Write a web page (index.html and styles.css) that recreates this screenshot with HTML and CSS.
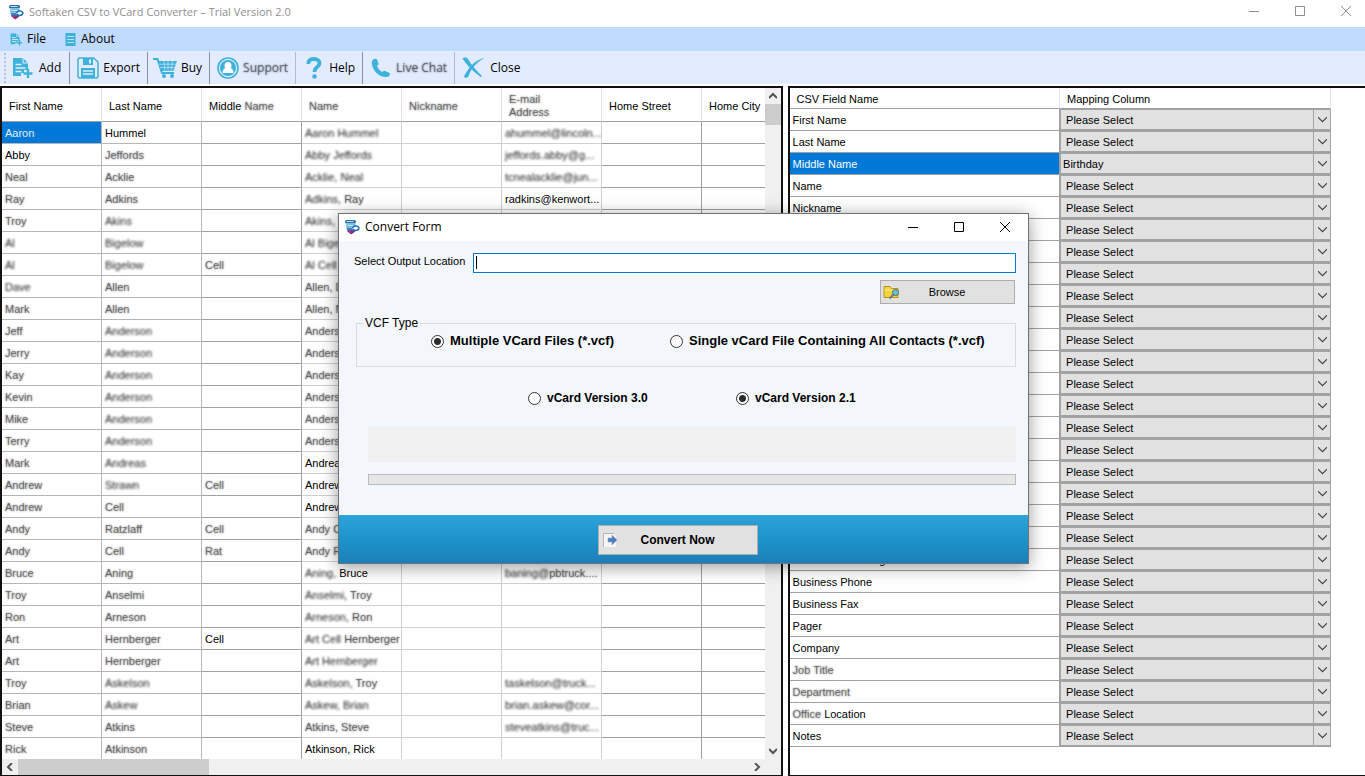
FILE: index.html
```html
<!DOCTYPE html>
<html lang="en">
<head>
<meta charset="utf-8">
<title>Softaken CSV to VCard Converter – Trial Version 2.0</title>
<link rel="stylesheet" href="styles.css">
</head>
<body>
<svg class="defs" aria-hidden="true">
  <symbol id="logo" viewBox="0 0 16 16">
    <rect x="1" y="1" width="11" height="3.500" rx="1.500" fill="#2b73b0"/>
    <path d="M2.500 2.500h7" stroke="#b9e0f5" stroke-width="1"/>
    <rect x="2" y="5" width="10" height="3" rx="1.500" fill="#5ab4e0"/>
    <path d="M3.500 6.300h6" stroke="#e4f5fd" stroke-width="1"/>
    <path d="M2 8.500h8v4H4z" fill="#3a83bd"/>
    <path d="M8.500 9c1-2.500 5-2.600 6-.8 1 2-1 3.600-3.500 3.300L9 10.500" fill="#fff" stroke="#1d6fb3" stroke-width="1.600"/>
    <path d="M2.500 11.500l4.500 4 4.500-3-3-1z" fill="#7d2c86"/>
    <path d="M5 12l2.500 1.800" stroke="#d93a6a"/>
  </symbol>
  <symbol id="file-add" viewBox="0 0 20 22">
    <path d="M0 1h10l5 5v7h-4v3H8v3H0z" fill="currentColor"/>
    <path d="M10 1v5h5" fill="none" stroke="#e3ecff" stroke-width="1"/>
    <path d="M2.500 7.500h6M2.500 11h10M2.500 14.500h6" stroke="#e3ecff" stroke-width="1.500"/>
    <path d="M15 12v9M10.500 16.500h9" stroke="currentColor" stroke-width="2.400"/>
  </symbol>
  <symbol id="list" viewBox="0 0 12 13">
    <rect x="1" width="10" height="13" fill="currentColor"/>
    <path d="M2.500 3.500h7M2.500 6.500h7M2.500 9.500h7" stroke="#bfdbff"/>
  </symbol>
  <symbol id="disk" viewBox="0 0 22 22">
    <path d="M3 1h13.500L21 5v14a2 2 0 0 1-2 2H3a2 2 0 0 1-2-2V3a2 2 0 0 1 2-2z" fill="#e3ecff" stroke="currentColor" stroke-width="1.500"/>
    <path d="M6 1h10v7H6z" fill="currentColor"/><path d="M12 2.500h2v4h-2z" fill="#e3ecff"/>
    <rect x="4" y="11" width="14" height="10" fill="currentColor"/>
    <path d="M6 14h10M6 17h10" stroke="#e3ecff" stroke-width="1.400"/>
  </symbol>
  <symbol id="cart" viewBox="0 0 24 22">
    <path d="M0 2h4.500L9 16h12" fill="none" stroke="currentColor" stroke-width="2"/>
    <path d="M5 4h19l-3.500 10H8z" fill="currentColor"/>
    <path d="M6 7.200h17M7 10.500h15M11 4l1 10M15 4v10M19.500 4L18 14" stroke="#e3ecff" stroke-width=".6"/>
    <circle cx="11" cy="19" r="2" fill="currentColor"/><circle cx="19" cy="19" r="2" fill="currentColor"/>
  </symbol>
  <symbol id="support" viewBox="0 0 22 22">
    <circle cx="11" cy="11" r="10" fill="none" stroke="currentColor" stroke-width="1.600"/>
    <circle cx="11" cy="11" r="8" fill="currentColor"/>
    <circle cx="11" cy="8.500" r="3.500" fill="#fff"/>
    <path d="M5.500 16c0-3 1.500-5 3.500-5h4c2 0 3.500 2 3.500 5z" fill="#fff"/>
  </symbol>
  <symbol id="help" viewBox="0 0 16 22">
    <path d="M2.500 7C2 3 5 2 8 2c3.500 0 5.500 1.800 5.500 4.300C13.500 10 8.500 10 8.500 15" fill="none" stroke="currentColor" stroke-width="3.800"/>
    <circle cx="8.500" cy="19.500" r="2.300" fill="currentColor"/>
  </symbol>
  <symbol id="phone" viewBox="0 0 22 22">
    <path d="M3 2.500C5 1.300 7 1.800 7.500 3.500l1 3c.3 1-.3 1.500-1.500 2.300 1 3 2.800 5 5.500 6.300 1-1.200 1.700-1.600 2.600-1.200l4 1.800c1.300.7 1 2.300 0 3.300C16 21.500 10 19.500 6.500 16 3 12.500 0 5.500 3 2.500z" fill="currentColor"/>
  </symbol>
  <symbol id="cross" viewBox="0 0 24 22">
    <path d="M1 1.500C3 0 5 1 6 2.500 9 8 14 14 19.500 19c-.5.800-1 .500-1.500 0C11 14 5 8 1 1.500z" fill="currentColor" stroke="currentColor"/>
    <path d="M23 1C16 4 10 10 6.500 19c-.5 2-3.500 2.500-4.500.500C7 10 13 2.500 23 1z" fill="currentColor"/>
  </symbol>
  <symbol id="min" viewBox="0 0 10 10"><path d="M0 5.500h10" stroke="currentColor"/></symbol>
  <symbol id="max" viewBox="0 0 10 10"><path d="M.5.500h9v9h-9z" fill="none" stroke="currentColor"/></symbol>
  <symbol id="x" viewBox="0 0 10 10"><path d="M0 0l10 10M10 0L0 10" stroke="currentColor"/></symbol>
  <symbol id="chev" viewBox="0 0 8 8"><path d="M0 2l4 4 4-4" fill="none" stroke="currentColor" stroke-width="2"/></symbol>
  <symbol id="arrow" viewBox="0 0 8 8"><path d="M0 2l4 4 4-4" fill="none" stroke="currentColor"/></symbol>
</svg>

<header class="titlebar">
  <svg class="logo"><use href="#logo"/></svg>
  <h1>Softaken CSV to VCard Converter – Trial Version 2.0</h1>
  <div class="winbtns">
    <button aria-label="Minimize"><svg><use href="#min"/></svg></button>
    <button aria-label="Maximize"><svg><use href="#max"/></svg></button>
    <button aria-label="Close window"><svg><use href="#x"/></svg></button>
  </div>
</header>

<nav class="menu">
  <button><svg><use href="#file-add"/></svg>File</button>
  <button><svg><use href="#list"/></svg>About</button>
</nav>

<div class="toolbar">
  <button class="first"><svg><use href="#file-add"/></svg>Add</button>
  <button><svg><use href="#disk"/></svg>Export</button>
  <button class="tight"><svg><use href="#cart"/></svg>Buy</button>
  <button class="soft"><svg><use href="#support"/></svg><span>Support</span></button>
  <button><svg><use href="#help"/></svg>Help</button>
  <button class="soft"><svg><use href="#phone"/></svg><span>Live Chat</span></button>
  <button class="tight"><svg><use href="#cross"/></svg>Close</button>
</div>

<main class="panes">
  <section class="pane contacts">
    <div class="view">
      <table class="grid">
        <thead>
          <tr>
            <th>First Name</th><th>Last Name</th><th>Middle <span class="mild">Name</span></th>
            <th><span class="mild">Name</span></th><th><span class="mild">Nickname</span></th>
            <th class="wrap"><span class="mild">E-mail Address</span></th><th>Home Street</th><th>Home City</th>
          </tr>
        </thead>
        <tbody id="contacts"></tbody>
      </table>
    </div>
    <div class="scroll vertical">
      <button aria-label="Scroll up"><svg class="up"><use href="#chev"/></svg></button>
      <span class="thumb"></span>
      <button aria-label="Scroll down"><svg><use href="#chev"/></svg></button>
    </div>
    <div class="scroll horizontal">
      <button aria-label="Scroll left"><svg class="left"><use href="#chev"/></svg></button>
      <span class="thumb"></span>
      <button aria-label="Scroll right"><svg class="right"><use href="#chev"/></svg></button>
    </div>
  </section>

  <section class="pane mapping">
    <table class="map">
      <thead><tr><th>CSV Field Name</th><th>Mapping Column</th></tr></thead>
      <tbody id="fields"></tbody>
    </table>
  </section>
</main>

<div class="dialog" role="dialog" aria-labelledby="dialog-title">
  <div class="dialog-title">
    <svg class="logo"><use href="#logo"/></svg>
    <h2 id="dialog-title">Convert Form</h2>
    <div class="winbtns">
      <button aria-label="Minimize dialog"><svg><use href="#min"/></svg></button>
      <button aria-label="Maximize dialog"><svg><use href="#max"/></svg></button>
      <button aria-label="Close dialog"><svg><use href="#x"/></svg></button>
    </div>
  </div>
  <form class="dialog-body">
    <div class="location">
      <label for="output">Select Output Location</label>
      <div class="field"><input id="output" type="text"><span class="caret"></span></div>
    </div>
    <button type="button" class="btn browse">
      <svg viewBox="0 0 18 16">
        <path d="M1 2.500h6l1.500 2H15v9H1z" fill="#f2d43c" stroke="#b8941c"/>
        <path d="M1.500 6h13" stroke="#fbee98"/>
        <path d="M10.500 10.500l-4 4" stroke="#777" stroke-width="2"/>
        <circle cx="12.500" cy="8.500" r="3" fill="#6fc0cf" stroke="#496a78"/>
      </svg>
      <span>Browse</span>
    </button>
    <fieldset>
      <legend>VCF Type</legend>
      <label><input type="radio" name="type" checked>Multiple VCard Files (*.vcf)</label>
      <label><input type="radio" name="type">Single vCard File Containing All Contacts (*.vcf)</label>
    </fieldset>
    <div class="versions">
      <label><input type="radio" name="version">vCard Version 3.0</label>
      <label><input type="radio" name="version" checked>vCard Version 2.1</label>
    </div>
    <div class="status"></div>
    <div class="progress" role="progressbar" aria-label="Conversion progress"></div>
  </form>
  <div class="dialog-foot">
    <button type="button" class="btn convert">
      <svg viewBox="0 0 16 16">
        <path d="M1 1h10l3 3v11H1z" fill="#f5f5f5"/><path d="M1.500 15V1.500H12" fill="none" stroke="#b5b5b5"/>
        <path d="M6 6h4V3l5 5-5 5v-3H6z" fill="#4f80bd" stroke="#86a6ce" stroke-width=".6"/>
      </svg>
      <span>Convert Now</span>
    </button>
  </div>
</div>
<script src="app.js"></script>
</body>
</html>
```

FILE: styles.css
```css
* { box-sizing: border-box; }
body {
  margin: 0;
  height: 100vh;
  display: flex;
  flex-direction: column;
  overflow: hidden;
  background: #fff;
  color: #000;
  font: 11px/14px "Liberation Sans", Arial, sans-serif;
}
button { margin: 0; padding: 0; border: 0; background: none; color: inherit; font: inherit; }
h1, h2 { margin: 0; font-size: 12px; font-weight: 400; }
.defs { position: absolute; width: 0; height: 0; }
.titlebar, .menu, .toolbar, .dialog-title { font: 12px/16px "Open Sans", "Noto Sans", sans-serif; }

.titlebar { height: 27px; flex: none; display: flex; align-items: center; padding: 0 8px; color: #8f8f8f; }
.titlebar h1 { padding-bottom: 3px; font-size: 11px; }
.logo { width: 16px; height: 16px; margin-right: 5px; }
.titlebar .logo { margin-bottom: 3px; }
.winbtns { margin-left: auto; display: flex; }
.winbtns button { width: 46px; height: 22px; display: grid; place-items: center; }
.winbtns svg { width: 10px; height: 10px; }
.titlebar .winbtns { margin-right: -12px; margin-bottom: 5px; }

.menu { height: 24px; flex: none; display: flex; align-items: center; gap: 18px; padding-left: 10px; background: #bfdbff; }
.menu button { display: flex; align-items: center; gap: 4px; }
.menu svg { width: 13px; height: 13px; color: #3fb2db; }

.toolbar { height: 33px; flex: none; display: flex; padding: 1px 0 0 4px; background: #e3ecff; }
.toolbar::before { content: ""; margin: 1px 1px 1px 0; border-left: 2px dotted #b9c0d0; }
.toolbar button { display: flex; align-items: center; gap: 4px; padding: 0 7px; border-right: 1px solid #8b8f98; }
.toolbar .first { gap: 5px; padding: 0 8px 0 5px; }
.toolbar .tight { padding-left: 5px; }
.toolbar button:last-child { border: 0; padding-left: 7px; }
.toolbar svg { width: 22px; height: 22px; color: #3fb2db; }
.toolbar .tight svg { width: 24px; }
.toolbar .soft { border-color: #b5bac6; }
.toolbar .soft span { color: rgba(0, 0, 0, .4); text-shadow: 0 0 2px rgba(0, 0, 0, .6); }

.panes { flex: 1; min-height: 0; display: flex; gap: 5px; padding-top: 2px; }
.pane { min-width: 0; border: 2px solid #111; border-bottom-width: 1px; overflow: hidden; }
.contacts { flex: 782; display: grid; grid-template: minmax(0, 1fr) 16px / minmax(0, 1fr) 16px; }
.mapping { flex: 578; border-right: 0; }
.view { overflow: hidden; }
table { border-collapse: separate; border-spacing: 0; table-layout: fixed; }
th { font-weight: 400; text-align: left; padding: 1px 7px 0; }
td { padding: 0 3px; height: 22px; white-space: nowrap; overflow: hidden; border: solid #a0a0a0; border-width: 0 1px 1px 0; }

.grid { width: 800px; }
.grid th { height: 34px; padding-top: 3px; line-height: 13px; white-space: nowrap; border: solid #e2e2e2; border-width: 0 1px 0 0; border-bottom: 1px solid #a0a0a0; }
.grid .wrap { padding-right: 40px; white-space: normal; }
.grid td:nth-child(-n+2) { border-color: #b6b6b6; }
.grid td:nth-child(n+4):nth-child(-n+6) { border-color: #cfcfcf; }
.grid .selected { background: #0078d7; color: #e4f1fb; }
.mild { color: rgba(0, 0, 0, .4); text-shadow: 0 0 2px rgba(0, 0, 0, .6); }
.heavy { color: #222; filter: blur(1px); }

.scroll { display: flex; background: #f0f0f0; color: #555; }
.scroll button { width: 16px; height: 16px; display: grid; place-items: center; }
.scroll svg { width: 8px; height: 8px; }
.up { transform: rotate(180deg); }
.left { transform: rotate(90deg); }
.right { transform: rotate(-90deg); }
.thumb { background: #cdcdcd; }
.vertical { flex-direction: column; }
.vertical .thumb { height: 21px; margin-bottom: auto; }
.horizontal .thumb { width: 25%; margin-right: auto; }
.contacts::after { content: ""; background: #f0f0f0; }

.map { width: 541px; }
.map th { height: 21px; border-bottom: 1px solid #a0a0a0; border-right: 1px solid #e2e2e2; }
.map td + td { padding: 0; border-right: 0; }
.map .selected { background: #0078d7; color: #fff; }
.pick { position: relative; }
.pick select {
  display: block;
  appearance: none;
  width: 100%;
  height: 21px;
  margin: 0;
  padding: 0 5px;
  border: 1px solid #a3a3a3;
  border-radius: 0;
  background: #e1e1e1;
  color: #000;
  font: inherit;
}
.pick .near { padding-left: 2px; }
.pick svg { position: absolute; right: 0; top: 0; width: 18px; height: 21px; padding: 6px 4px; border-left: 1px solid #a3a3a3; color: #444; pointer-events: none; }

.dialog {
  position: absolute;
  left: 338px;
  top: 213px;
  width: 691px;
  border: 1px solid #6d7378;
  background: #f3f7fc;
  box-shadow: 0 3px 16px rgba(0, 0, 0, .4);
}
.dialog-title { height: 27px; display: flex; align-items: center; padding: 0 0 2px 5px; background: #fff; }
.dialog-body { height: 274px; padding: 12px 12px 0 15px; display: flex; flex-direction: column; }
.location { display: flex; gap: 10px; }
.location label { width: 109px; white-space: nowrap; padding-top: 1px; }
.field { flex: 1; position: relative; }
.field input { display: block; width: 100%; height: 20px; border: 1px solid #0078d7; background: #fff; font: inherit; outline: 0; padding: 0 4px; }
.caret { position: absolute; left: 3px; top: 3px; width: 1px; height: 13px; background: #000; }
.btn { display: flex; align-items: center; background: #e1e1e1; border: 1px solid #adadad; }
.btn span { flex: 1; text-align: center; }
.browse { align-self: flex-end; width: 135px; height: 24px; margin: 7px 1px 0 0; padding: 0 21px 0 2px; }
.browse svg { width: 18px; height: 16px; }
fieldset { margin: 13px 0 0 2px; padding: 5px 0 0 74px; height: 50px; border: 1px solid #dcdcdc; display: flex; gap: 56px; }
legend { margin-left: -68px; padding: 0 2px; line-height: 12px; font-size: 12px; }
fieldset label, .versions label { display: flex; align-items: center; gap: 6px; height: 14px; font-weight: 700; font-size: 13px; white-space: nowrap; }
.versions { display: grid; grid-template-columns: 208px auto; padding-left: 174px; margin-top: 24px; }
.versions label { font-size: 12px; }
input[type="radio"] { appearance: none; flex: none; width: 13px; height: 13px; margin: 0; border: 1px solid #333; border-radius: 50%; background: #fff; }
input[type="radio"]:checked { background: radial-gradient(circle, #2b2b2b 3px, #fff 4px); }
.status { height: 35px; margin: 22px 0 12px 14px; background: #f0f0f0; }
.progress { height: 11px; margin-left: 14px; background: #e6e6e6; border: 1px solid #bcbcbc; }
.dialog-foot { height: 48px; display: flex; justify-content: center; align-items: center; border-top: 1px solid #35a6d8; background: linear-gradient(#2ba2d8, #1d93cb 50%, #1c7fb7); }
.convert { width: 160px; height: 30px; margin-right: 12px; padding: 0 19px 0 3px; font-size: 12px; font-weight: 700; }
.convert svg { width: 16px; height: 16px; }
```

FILE: app.js
```js
// Each cell is plain text split into runs by "|"; "~" starts a softened run, "^" a blurred one.
const contacts = [
  ["Aaron", "Hummel", "", "^Aaron Hummel", "^ahummel@lincoln..."],
  ["Abby", "~Jeffords", "", "^Abby Jeffords", "^jeffords.abby@g..."],
  ["~Neal", "~Acklie", "", "^Acklie, Neal", "^tcnealacklie@jun..."],
  ["~Ray", "~Adkins", "", "^Adkins, |~Ray", "radkins@kenwort..."],
  ["~Troy", "^Akins", "", "^Akins, T", ""],
  ["^Al", "^Bigelow", "", "^Al Bigel", ""],
  ["^Al", "^Bigelow", "~Cell", "^Al Cell B", ""],
  ["^Dave", "~Allen", "", "~Allen, D", ""],
  ["~Mark", "~Allen", "", "~Allen, M", ""],
  ["~Jeff", "^Anderson", "", "~Anderson", ""],
  ["~Jerry", "^Anderson", "", "~Anderson", ""],
  ["~Kay", "^Anderson", "", "~Anderson", ""],
  ["~Kevin", "^Anderson", "", "~Anderson", ""],
  ["~Mike", "^Anderson", "", "~Anderson", ""],
  ["~Terry", "^Anderson", "", "~Anderson", ""],
  ["~Mark", "^Andreas", "", "Andreas", ""],
  ["~Andrew", "^Strawn", "~Cell", "Andrew", ""],
  ["~Andrew", "~Cell", "", "Andrew", ""],
  ["~Andy", "~Ratzlaff", "~Cell", "~Andy Ce", ""],
  ["~Andy", "~Cell", "~Rat", "~Andy Ra", ""],
  ["~Bruce", "~Aning", "", "^Aning, |Bruce", "^baning@|~pbtruck...."],
  ["~Troy", "~Anselmi", "", "^Anselmi, |~Troy", ""],
  ["~Ron", "~Arneson", "", "^Arneson, |~Ron", ""],
  ["~Art", "~Hernberger", "Cell", "^Art Cell |~Hernberger", ""],
  ["~Art", "~Hernberger", "", "^Art Hernberger", ""],
  ["~Troy", "^Askelson", "", "^Askelson, |~Troy", "^taskelson@truck..."],
  ["~Brian", "^Askew", "", "^Askew, Brian", "^brian.askew@cor..."],
  ["~Steve", "~Atkins", "", "~Atkins, Steve", "^steveatkins@truc..."],
  ["~Rick", "~Atkinson", "", "Atkinson, Rick", ""]
];

const fields = ["First Name", "Last Name", "Middle Name", "Name", "Nickname"]
  .concat(Array(15).fill(""))
  .concat(["Business Web Page", "Business Phone", "Business Fax", "Pager", "Company",
    "~Job Title", "~Department", "~Office| Location", "Notes"]);

const format = text => text.split("|").map(run => {
  if (run[0] === "~") return `<span class="mild">${run.slice(1)}</span>`;
  if (run[0] === "^") return `<span class="heavy">${run.slice(1)}</span>`;
  return run;
}).join("");

document.getElementById("contacts").innerHTML = contacts.map(([first, last, middle, name, mail], i) =>
  `<tr><td${i ? "" : ' class="selected"'}>${format(first)}</td>` +
  [last, middle, name, "", mail, "", ""].map(cell => `<td>${format(cell)}</td>`).join("") + "</tr>"
).join("");

document.getElementById("fields").innerHTML = fields.map((field, i) => {
  const chosen = i === 2;
  return `<tr><td${chosen ? ' class="selected"' : ""}>${format(field)}</td>
    <td><div class="pick"><select aria-label="Mapping column for field ${i + 1}"${chosen ? ' class="near"' : ""}>
    <option>${chosen ? "Birthday" : "Please Select"}</option></select><svg><use href="#arrow"/></svg></div></td></tr>`;
}).join("");
```
